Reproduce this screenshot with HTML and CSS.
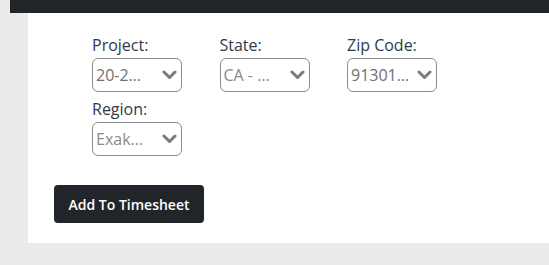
FILE: index.html
```html
<!DOCTYPE html>
<html lang="en">
<head>
<meta charset="UTF-8">
<meta name="viewport" content="width=device-width, initial-scale=1.0">
<title>Timesheet Entry</title>
<link rel="stylesheet" href="styles.css">
</head>
<body>

<div class="topbar"></div>

<div class="panel">
  <div class="fields">
    <div class="field">
      <label>Project:</label>
      <div class="select">
        <span class="value">20-2…</span>
        <svg class="chevron" width="15" height="10" viewBox="0 0 15 10"><path d="M2 2 L7.5 7.5 L13 2" fill="none" stroke="#7a7a7a" stroke-width="3" stroke-linecap="round" stroke-linejoin="round"/></svg>
      </div>
    </div>
    <div class="field">
      <label>State:</label>
      <div class="select">
        <span class="value light">CA - …</span>
        <svg class="chevron" width="15" height="10" viewBox="0 0 15 10"><path d="M2 2 L7.5 7.5 L13 2" fill="none" stroke="#7a7a7a" stroke-width="3" stroke-linecap="round" stroke-linejoin="round"/></svg>
      </div>
    </div>
    <div class="field">
      <label>Zip Code:</label>
      <div class="select">
        <span class="value">91301…</span>
        <svg class="chevron" width="15" height="10" viewBox="0 0 15 10"><path d="M2 2 L7.5 7.5 L13 2" fill="none" stroke="#7a7a7a" stroke-width="3" stroke-linecap="round" stroke-linejoin="round"/></svg>
      </div>
    </div>
    <div class="field">
      <label>Region:</label>
      <div class="select">
        <span class="value light">Exak…</span>
        <svg class="chevron" width="15" height="10" viewBox="0 0 15 10"><path d="M2 2 L7.5 7.5 L13 2" fill="none" stroke="#7a7a7a" stroke-width="3" stroke-linecap="round" stroke-linejoin="round"/></svg>
      </div>
    </div>
  </div>

  <button class="add-btn">Add To Timesheet</button>
</div>

</body>
</html>
```

FILE: styles.css
```css
body {
  margin: 0;
  padding: 0;
  background: #ebebeb;
  font-family: 'Open Sans', 'Noto Sans', sans-serif;
}

.topbar {
  height: 13px;
  margin-left: 10px;
  background: #212529;
}

.panel {
  margin-left: 28px;
  padding: 22px 0 20px 26px;
  background: #fff;
}

.fields {
  display: grid;
  grid-template-columns: repeat(3, 90px);
  column-gap: 37.5px;
  row-gap: 7px;
  margin-left: 38px;
}

.field label {
  display: block;
  font-size: 16px;
  line-height: 20px;
  color: #2f3a4a;
  margin-bottom: 3px;
}

.select {
  display: flex;
  align-items: center;
  box-sizing: border-box;
  width: 90px;
  height: 34px;
  padding: 0 4px 0 3px;
  border: 1px solid #8c8c8c;
  border-radius: 6px;
}

.select .value {
  flex: 1;
  min-width: 0;
  white-space: nowrap;
  font-size: 16px;
  color: #707070;
}

.select .value.light {
  color: #8a8a8a;
}

.chevron {
  flex-shrink: 0;
}

.add-btn {
  display: block;
  margin-top: 29px;
  width: 150px;
  height: 38px;
  padding: 0;
  background: #212529;
  color: #fff;
  border: none;
  border-radius: 4px;
  font-family: 'Open Sans', 'Noto Sans', sans-serif;
  font-size: 14px;
  font-weight: 600;
}
```
